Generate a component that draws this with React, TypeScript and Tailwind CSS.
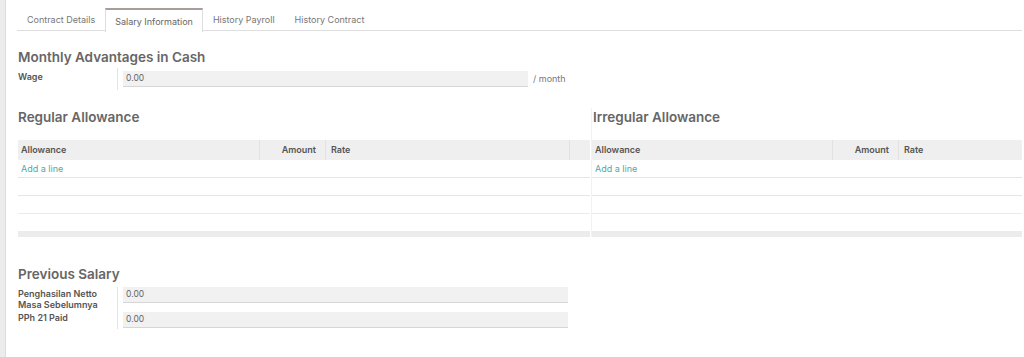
import React from "react";

const tabs = ["Contract Details", "Salary Information", "History Payroll", "History Contract"];

const AllowanceTable = ({ wide }: { wide: boolean }) => {
  return (
    <div className="flex flex-col">
      <div className="flex h-[20px] items-center bg-[#efefef] text-[9px] font-semibold text-[#555]">
        <div className={`${wide ? "w-[242px]" : "w-[241px]"} pl-[3px] border-r border-[#e2e2e2] h-full flex items-center`}>
          Allowance
        </div>
        <div className="w-[66px] pr-[9px] text-right border-r border-[#e2e2e2] h-full flex items-center justify-end">
          Amount
        </div>
        <div className={`${wide ? "w-[244px] border-r border-[#e2e2e2]" : "flex-1"} pl-[5px] h-full flex items-center`}>
          Rate
        </div>
        {wide && <div className="flex-1" />}
      </div>
      <div className="h-[18px] flex items-center pl-[3px] border-b border-[#e6e6e6] text-[9px] text-[#4fa8a8]">
        Add a line
      </div>
      <div className="h-[18px] border-b border-[#e6e6e6]" />
      <div className="h-[18px] border-b border-[#ececec]" />
      <div className="h-[17px]" />
      <div className="h-[6px] bg-[#ececec]" />
    </div>
  );
};

const FieldInput = ({ w }: { w: string }) => (
  <div className={`${w} h-[16px] bg-[#f1f1f1] border-b border-[#d6d6d6] flex items-center pl-[3px] text-[8.5px] text-[#666]`}>
    0.00
  </div>
);

export default function App() {
  return (
    <div
      className="w-[1024px] h-[357px] bg-white flex overflow-hidden"
      style={{ fontFamily: "Inter, 'Open Sans', sans-serif" }}
    >
      <div className="w-[6px] h-full bg-[#ececec] border-r border-[#dcdcdc]" />
      <div className="flex-1 flex flex-col pl-[11px] pr-[2px]">
        {/* tabs */}
        <div className="mt-[8px] flex h-[23px] border-b border-[#dedede] text-[9px] text-[#777]">
          {tabs.map((t, i) =>
            i === 1 ? (
              <div
                key={t}
                className="h-[24px] px-[9px] pt-[1px] flex items-center bg-white border-t-2 border-t-[#ab9c9c] border-x border-x-[#dedede] text-[#666]"
              >
                {t}
              </div>
            ) : (
              <div key={t} className="px-[10px] pt-[1px] flex items-center">
                {t}
              </div>
            )
          )}
        </div>

        <div className="pl-[1px]">
          <h2 className="mt-[17px] text-[13.5px] font-semibold text-[#666] leading-[18px]">
            Monthly Advantages in Cash
          </h2>
          <div className="mt-[2px] flex items-center h-[22px]">
            <div className="w-[99px] self-start pt-[2px] text-[9px] font-semibold text-[#555]">Wage</div>
            <div className="w-px h-full bg-[#e3e3e3] mr-[5px]" />
            <FieldInput w="w-[405px]" />
            <span className="ml-[5px] text-[9px] text-[#777]">/ month</span>
          </div>
        </div>

        <div className="mt-[18px] flex">
          <div className="w-[573px] pl-[1px]">
            <h2 className="text-[13.5px] font-semibold text-[#666] leading-[18px]">Regular Allowance</h2>
            <div className="mt-[14px]">
              <AllowanceTable wide={true} />
            </div>
          </div>
          <div className="flex-1 border-l border-[#f2f2f2] ml-[1px]">
            <h2 className="pl-[1px] text-[13.5px] font-semibold text-[#666] leading-[18px]">Irregular Allowance</h2>
            <div className="mt-[14px]">
              <AllowanceTable wide={false} />
            </div>
          </div>
        </div>

        <div className="pl-[1px]">
          <h2 className="mt-[28px] text-[13.5px] font-semibold text-[#666] leading-[18px]">Previous Salary</h2>
          <div className="mt-[4px] flex">
            <div className="w-[99px] flex flex-col text-[9px] font-semibold text-[#555] leading-[11px] pt-[1px]">
              <span>Penghasilan Netto</span>
              <span>Masa Sebelumnya</span>
              <span className="mt-[2px]">PPh 21 Paid</span>
            </div>
            <div className="w-px h-[42px] bg-[#e3e3e3] mr-[5px]" />
            <div className="flex flex-col gap-[9px]">
              <FieldInput w="w-[445px]" />
              <FieldInput w="w-[445px]" />
            </div>
          </div>
        </div>
      </div>
    </div>
  );
}
